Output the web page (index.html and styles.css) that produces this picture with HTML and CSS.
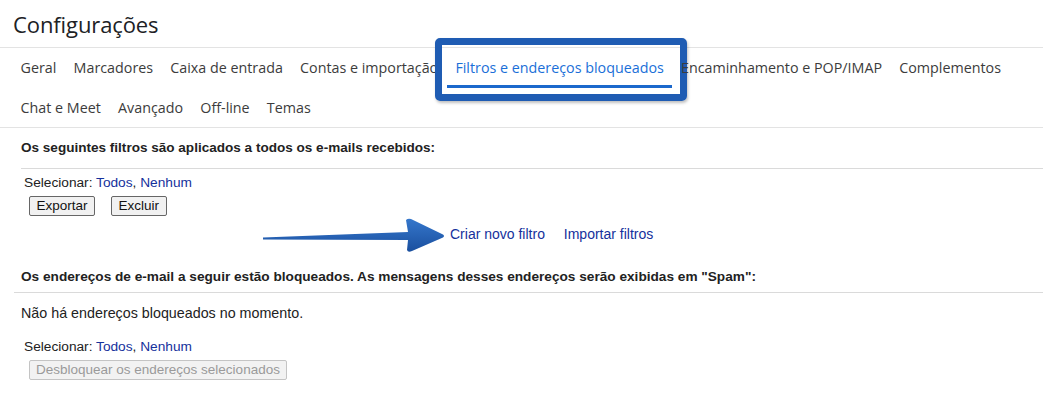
FILE: index.html
```html
<!DOCTYPE html>
<html lang="pt-BR">
<head>
<meta charset="utf-8">
<title>Configurações</title>
<link rel="stylesheet" href="styles.css">
</head>
<body>
<div class="page">
  <div class="title">Configurações</div>
  <nav class="tabs">
    <span class="tab">Geral</span>
    <span class="tab">Marcadores</span>
    <span class="tab">Caixa de entrada</span>
    <span class="tab">Contas e importação</span>
    <span class="tab active">Filtros e endereços bloqueados<span class="highlight"></span></span>
    <span class="tab">Encaminhamento e POP/IMAP</span>
    <span class="tab">Complementos</span>
    <span class="tab">Chat e Meet</span>
    <span class="tab">Avançado</span>
    <span class="tab">Off-line</span>
    <span class="tab">Temas</span>
  </nav>

  <section class="filters">
    <h2 class="sec-title">Os seguintes filtros são aplicados a todos os e-mails recebidos:</h2>
    <div class="select">Selecionar: <a>Todos</a>, <a>Nenhum</a></div>
    <div class="buttons">
      <button class="btn">Exportar</button>
      <button class="btn">Excluir</button>
    </div>
    <div class="actions">
      <svg class="arrow" width="190" height="40" viewBox="0 0 190 40">
        <defs>
          <linearGradient id="ag" x1="0" y1="0" x2="0" y2="1">
            <stop offset="0" stop-color="#3577cc"/>
            <stop offset="1" stop-color="#1a4f9e"/>
          </linearGradient>
        </defs>
        <path d="M1 20.5 L146 15 L144 3 Q146 1 149 2 L181 17.5 Q183 19 181 20.5 L150 34 Q146 36 145 33 L146 23 L1 22.5 Z" fill="url(#ag)"/>
      </svg>
      <a class="act">Criar novo filtro</a>
      <a class="act">Importar filtros</a>
    </div>
  </section>

  <section class="blocked">
    <h2 class="sec-title2">Os endereços de e-mail a seguir estão bloqueados. As mensagens desses endereços serão exibidas em "Spam":</h2>
    <p class="none">Não há endereços bloqueados no momento.</p>
    <div class="select">Selecionar: <a>Todos</a>, <a>Nenhum</a></div>
    <div class="buttons">
      <button class="btn disabled" disabled>Desbloquear os endereços selecionados</button>
    </div>
  </section>
</div>
</body>
</html>
```

FILE: styles.css
```css
* { box-sizing: border-box; }
body {
  margin: 0;
  background: #fff;
  font-family: "Liberation Sans", Arial, sans-serif;
  color: #222;
}
.page { width: 1043px; }
.title {
  height: 48px;
  padding: 9px 0 0 13px;
  font-family: "Open Sans", Roboto, sans-serif;
  font-size: 22px;
  color: #202124;
  border-bottom: 1px solid #e3e3e3;
  letter-spacing: -0.1px;
}
.tabs {
  display: flex;
  flex-wrap: wrap;
  height: 80px;
  padding-left: 12px;
  border-bottom: 1px solid #e3e3e3;
}
.tab {
  position: relative;
  height: 40px;
  line-height: 40px;
  padding: 0 8.6px;
  font-family: "Open Sans", Roboto, sans-serif;
  font-size: 14.3px;
  color: #3c3c3c;
}
.tab.active {
  color: #1a6fd8;
  box-shadow: inset 0 -3px 0 #1b68cc;
}
.highlight {
  position: absolute;
  left: -12px;
  right: -15px;
  top: -10px;
  bottom: -13px;
  border: 7px solid #1f5cb3;
  border-radius: 5px;
  box-shadow: 1px 2px 3px rgba(0,0,0,0.25);
  pointer-events: none;
}
.sec-title {
  margin: 0 0 0 21px;
  padding-top: 12px;
  height: 41px;
  font-size: 13.55px;
  font-weight: bold;
  color: #222;
  border-bottom: 1px solid #dadada;
}
.select {
  margin-left: 24px;
  margin-top: 5px;
  font-size: 13.7px;
  line-height: 18px;
  color: #222;
}
.select a { color: #15319c; }
.buttons {
  display: flex;
  gap: 16px;
  margin-left: 29px;
  margin-top: 4px;
}
.btn {
  height: 20px;
  padding: 0 6.5px;
  font-family: "Liberation Sans", Arial, sans-serif;
  font-size: 13.5px;
  line-height: 18px;
  color: #111;
  background: #f1f1f1;
  border: 1px solid #666;
  border-radius: 2px;
}
.btn.disabled {
  color: #9a9a9a;
  border-color: #c4c4c4;
  background: #f2f2f2;
  padding: 0 6px;
}
.actions {
  position: relative;
  height: 38px;
  padding-left: 450px;
  padding-top: 10px;
  font-size: 14px;
}
.act { color: #15319c; margin-right: 15px; }
.arrow {
  position: absolute;
  left: 262px;
  top: 1px;
}
.sec-title2 {
  margin: 0 0 0 14px;
  padding: 15px 0 0 7px;
  height: 39px;
  font-size: 13.65px;
  font-weight: bold;
  color: #222;
  border-bottom: 1px solid #dadada;
}
.none {
  margin: 11px 0 0 21px;
  font-size: 14.3px;
  line-height: 18px;
}
.blocked .select { margin-top: 16px; }
.blocked .buttons { margin-top: 4px; }
```
